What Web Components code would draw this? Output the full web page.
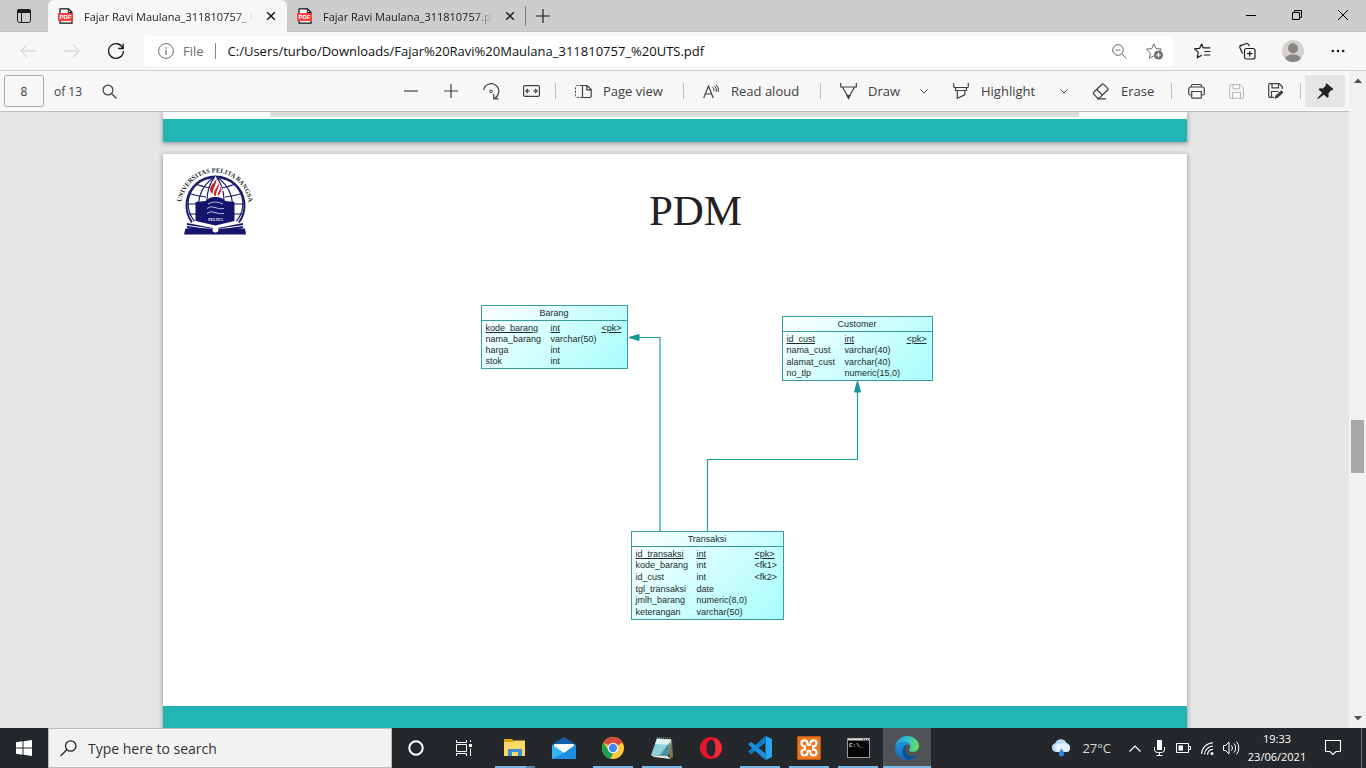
<!DOCTYPE html>
<html lang="en">
<head>
<meta charset="utf-8">
<title>Fajar Ravi Maulana_311810757_ UTS.pdf</title>
<style>
html, body { margin: 0; height: 100%; }
body { font-family: "Open Sans", "Noto Sans", sans-serif; font-size: 13px; color: #1b1b1b; overflow: hidden; }
</style>
</head>
<body>
<desktop-shell>
  <tab-strip slot="browser">
    <browser-tab active>Fajar Ravi Maulana_311810757_ UTS.pdf</browser-tab>
    <browser-tab>Fajar Ravi Maulana_311810757.pdf</browser-tab>
  </tab-strip>
  <address-bar slot="browser" url="C:/Users/turbo/Downloads/Fajar%20Ravi%20Maulana_311810757_%20UTS.pdf"></address-bar>
  <pdf-viewer slot="browser">
    <pdf-toolbar slot="toolbar" page="8" total="13"></pdf-toolbar>
    <pdf-page tail></pdf-page>
    <pdf-page>
      <slide-header>PDM</slide-header>
      <er-diagram>
        <er-entity name="Barang" style="left:0;top:0;width:147px;height:64px;--type:65px;--key:25px"
          fields="kode_barang|int|<pk>;nama_barang|varchar(50)|;harga|int|;stok|int|"></er-entity>
        <er-entity name="Customer" style="left:301px;top:11px;width:151px;height:65px;--type:58px;--key:25px"
          fields="id_cust|int|<pk>;nama_cust|varchar(40)|;alamat_cust|varchar(40)|;no_tlp|numeric(15,0)|"></er-entity>
        <er-entity name="Transaksi" style="left:150px;top:226px;width:153px;height:89px;--type:61px;--key:28px"
          fields="id_transaksi|int|<pk>;kode_barang|int|<fk1>;id_cust|int|<fk2>;tgl_transaksi|date|;jmlh_barang|numeric(8,0)|;keterangan|varchar(50)|"></er-entity>
      </er-diagram>
    </pdf-page>
  </pdf-viewer>
  <task-bar slot="taskbar"></task-bar>
</desktop-shell>

<script>
/* Registers an element whose shadow root holds the given styles and markup. */
function define(name, css, html, ready) {
  const tpl = document.createElement('template');
  customElements.define(name, class extends HTMLElement {
    connectedCallback() {
      if (this.shadowRoot) return;
      this.attachShadow({ mode: 'open' });
      tpl.innerHTML = `<style>:host,*{box-sizing:border-box}button{font:inherit;color:inherit;border:0;background:none;padding:0;margin:0}${css}</style>` +
        (typeof html === 'function' ? html(this) : html);
      this.shadowRoot.append(tpl.content.cloneNode(true));
      if (ready) ready(this, this.shadowRoot);
    }
  });
}
const esc = s => s.replace(/&/g, '&amp;').replace(/</g, '&lt;');

/* Icon set: [width, height, markup]. Strokes use currentColor. */
const S = 'fill="none" stroke="currentColor"';
const ICONS = {
  tabs: [14, 14, `<rect x=".5" y=".5" width="13" height="13" rx="2" ${S}/><path d="M0 2a2 2 0 0 1 2-2h10a2 2 0 0 1 2 2v2H0z" fill="currentColor"/><path d="M4.500 4v9" ${S}/>`],
  pdf: [16, 16, `<path d="M2 .8h8.500l3.500 3.500V15.200H2z" fill="#fff" stroke="#111" stroke-width="1.200"/><path d="M10.300.8v3.700H14" fill="none" stroke="#111"/><rect x="0" y="5" width="15" height="8" fill="#f8403c"/><text x="7.500" y="11.300" text-anchor="middle" font-family="Liberation Sans, sans-serif" font-weight="700" font-size="6" fill="#fff">PDF</text>`],
  close: [10, 10, `<path d="M1.200 1.200l7.600 7.600M8.800 1.200L1.200 8.800" ${S} stroke-width="1.500"/>`],
  plus: [14, 14, `<path d="M7 0v14M0 7h14" ${S} stroke-width="1.200"/>`],
  min: [10, 10, `<path d="M0 5.500h10" ${S}/>`],
  restore: [10, 10, `<path d="M.5 2.500h7v7h-7zM2.500 2.500v-2h7v7h-2" ${S}/>`],
  wclose: [10, 10, `<path d="M0 0l10 10M10 0L0 10" ${S}/>`],
  back: [16, 14, `<path d="M16 7H.8M7 .8L.8 7 7 13.200" ${S}/>`],
  fwd: [16, 14, `<path d="M0 7h15.200M9 .8L15.200 7 9 13.200" ${S}/>`],
  reload: [18, 18, `<path d="M15.900 6.300A7.400 7.400 0 1 0 16.400 9" ${S} stroke-width="1.300"/><path d="M16.200 1.500v5h-5" ${S} stroke-width="1.300"/>`],
  info: [16, 16, `<circle cx="8" cy="8" r="7.400" ${S}/><path d="M8 7v5M8 4.300v1.400" ${S} stroke-width="1.200"/>`],
  zoomout: [15, 15, `<circle cx="6" cy="6" r="5.300" ${S}/><path d="M10 10l4.500 4.500M3.500 6h5" ${S}/>`],
  staradd: [18, 17, `<path d="M7.900.9l2.100 4.600 5.500.6-2.700 2.900M7.900.9L5.800 5.500l-5.400.7 4 3.800-1 5.300 4.300-2.500" ${S} stroke-linejoin="round"/><circle cx="12.500" cy="12" r="4.500" fill="currentColor"/><path d="M12.500 9.500v5M10 12h5" stroke="#fff" stroke-width="1.200"/>`],
  favs: [17, 16, `<path d="M9.300 4.900L7.700 1 5.600 5.300.6 5.900l3.700 3.500-1 5.200 4.500-2.400M9.300 4.900h7M10.300 8.500h6M9.800 12h6.500" ${S} stroke-width="1.200" stroke-linejoin="round"/>`],
  collections: [17, 17, `<rect x="5.500" y="5.500" width="10.500" height="10.500" rx="2" ${S} stroke-width="1.200"/><path d="M10.700 8v5.500M8 10.700h5.500" ${S} stroke-width="1.200"/><path d="M3.500 10.500L1 5a2 2 0 0 1 1-2.600L7 .7a2 2 0 0 1 2.600 1L10.200 3" ${S} stroke-width="1.200"/>`],
  avatar: [22, 22, `<defs><clipPath id="c"><circle cx="11" cy="11" r="11"/></clipPath></defs><circle cx="11" cy="11" r="11" fill="#d3d1ce"/><g fill="#8a8683" clip-path="url(#c)"><circle cx="11" cy="8.300" r="5"/><ellipse cx="11" cy="19" rx="7.800" ry="4.500"/></g>`],
  dots: [14, 4, `<g fill="currentColor"><circle cx="1.800" cy="2" r="1.300"/><circle cx="7" cy="2" r="1.300"/><circle cx="12.200" cy="2" r="1.300"/></g>`],
  search: [15, 15, `<circle cx="6" cy="6" r="4.900" ${S} stroke-width="1.200"/><path d="M9.500 9.500l5 5" ${S} stroke-width="1.200"/>`],
  minus: [14, 14, `<path d="M0 7h14" ${S} stroke-width="1.200"/>`],
  rotate: [17, 17, `<path d="M.7 7A7.600 7.600 0 1 1 11.500 15.200" ${S} stroke-width="1.200"/><path d="M10.700 11v4.800h4.800" ${S} stroke-width="1.200"/><circle cx="8" cy="8.300" r="1.300" ${S}/>`],
  fit: [17, 12, `<rect x=".6" y=".6" width="15.800" height="10.800" rx="1.500" ${S} stroke-width="1.200"/><path d="M3.500 6h3.500M10 6h3.500M5 4L3 6l2 2M12 4l2 2-2 2" ${S} stroke-width="1.200"/>`],
  pageview: [17, 13, `<path d="M7 .5H2.500a2 2 0 0 0-2 2v8a2 2 0 0 0 2 2H7" ${S} stroke-dasharray="2.200 1.300"/><path d="M7.500.5h4.700l4 4v6.500a1.500 1.500 0 0 1-1.500 1.500H7.500zM11.800.5v4.300h4.400" ${S} stroke-width="1.200"/>`],
  read: [17, 15, `<path d="M.7 14L5.500 2l4.800 12M2.300 10h6.400" ${S} stroke-width="1.200"/><path d="M9.500 3.200a4 4 0 0 1 1.500 4M11.300 1.800a6 6 0 0 1 2 6M13 .5a8 8 0 0 1 2.300 7.500" ${S}/>`],
  draw: [17, 16, `<path d="M.7 0v4h15.600V0M2.500 4.300L8.500 14.500 14.500 4.300M7 12.500h3l-1.500 3z" ${S} stroke-width="1.200"/>`],
  highlight: [18, 16, `<path d="M1.700 0v3.500a1 1 0 0 0 1 1h12.600a1 1 0 0 0 1-1V0M3.500 4.500v3h11v-3M5.300 7.500v7.800l7.500-3.500V7.500" ${S} stroke-width="1.200"/>`],
  erase: [18, 17, `<path d="M1.700 9.300L10 1.300a1.200 1.200 0 0 1 1.700 0l4 4a1.200 1.200 0 0 1 0 1.700L7.500 15H5.300L1.700 11.200a1.300 1.300 0 0 1 0-1.900zM4.700 6.500l6 5.700M5 15.900h9" ${S} stroke-width="1.200"/>`],
  chev: [8, 5, `<path d="M.5.5L4 4 7.500.5" ${S}/>`],
  print: [17, 15, `<path d="M3.500 11H2.200A1.500 1.500 0 0 1 .7 9.500V5a2 2 0 0 1 2-2h11.600a2 2 0 0 1 2 2v4.500a1.500 1.500 0 0 1-1.500 1.500h-1.300M3.500 3V1.500a1 1 0 0 1 1-1h8a1 1 0 0 1 1 1V3M3.700 7.500h9.600v5.700a1 1 0 0 1-1 1H4.700a1 1 0 0 1-1-1z" ${S} stroke-width="1.200"/>`],
  save: [15, 15, `<path d="M1.700.6h9.500l3.200 3.200v9.500a1 1 0 0 1-1 1H1.700a1 1 0 0 1-1-1V1.600a1 1 0 0 1 1-1zM4 .6v4.200h6.500V.6M3.500 14.200V8.500h8v5.700" ${S}/>`],
  saveas: [16, 16, `<path d="M6 14.300H1.700a1 1 0 0 1-1-1V1.600a1 1 0 0 1 1-1h9.500l3.200 3.200V6M4 .6v4.200h6.500V.6M3.500 14.200V8.500h7" ${S} stroke-width="1.200"/><path d="M13.300 7.300l2.200 2.200-6 5.500-3 .8.800-3z" fill="currentColor"/>`],
  pin: [17, 16, `<path d="M9.500.3l6.800 5.800-1 1.300-1.300-.2-2.600 3.300.3 3-1.200 1.300-3.700-3.100L1 16l-.7-.7 4.900-5.500-3.700-3.200 1.200-1.300 3.200.1 3-3-.4-1.200z" fill="#222"/>`],
  up: [8, 5, `<path d="M0 5l4-4.500L8 5z" fill="currentColor"/>`],
  down: [8, 5, `<path d="M0 0l4 4.500L8 0z" fill="currentColor"/>`],
  win: [16, 16, `<path d="M0 2.300L6.500 1.300v6.200H0zM7.500 1.200L16 0v7.500H7.500zM0 8.500h6.500v6.200L0 13.700zM7.500 8.500H16V16l-8.500-1.200z" fill="#fff"/>`],
  tsearch: [17, 17, `<circle cx="10.700" cy="6" r="5.200" ${S} stroke-width="1.300"/><path d="M6.800 9.700L.6 16" ${S} stroke-width="1.300"/>`],
  cortana: [16, 16, `<circle cx="8" cy="8" r="6.700" fill="none" stroke="#fff" stroke-width="2"/>`],
  taskview: [16, 16, `<path d="M.5 4.500h10v7H.5zM.5 0v2.500h10V0M.5 16v-2.500h10V16M14.500 0v2M14.500 8.500V16" fill="none" stroke="#fff"/><path d="M13 4h3v3h-3z" fill="#fff"/>`],
  explorer: [22, 20, `<path d="M0 1h8l2 2v15H0z" fill="#e5a50a"/><path d="M0 4h9l1.500-1.500H21V18H0z" fill="#ffd767"/><path d="M4 18v-7h14v7h-4v-4H8v4z" fill="#3f8fd6"/>`],
  mail: [24, 22, `<path d="M0 7.500L12 0l12 7.500V12H0z" fill="#0f5ea8"/><path d="M2 7h20v9H2z" fill="#f4f8fc"/><path d="M0 7.500L12 16 24 7.500V22H0z" fill="#37b6ef"/><path d="M0 22l14-7.300L24 7.500V22z" fill="#1d8fe0"/>`],
  chrome: [22, 22, `<circle cx="11" cy="11" r="11" fill="#fbc934"/><path d="M11 11L1.500 5.500A11 11 0 0 1 20.500 5.500z" fill="#dc4a3d"/><path d="M1.500 5.500L7 14l4 2-2.500 5.700A11 11 0 0 1 1.500 5.500z" fill="#1e9e55"/><path d="M11 5.800h9.700L19 3.500 11 1z" fill="#dc4a3d"/><circle cx="11" cy="11" r="5.300" fill="#fff"/><circle cx="11" cy="11" r="4.200" fill="#4285f4"/>`],
  notepad: [24, 22, `<path d="M17 3l5-.5L23 20l-3 2z" fill="#8a7346"/><path d="M7 1.500L21 2.500 18 19 1 18z" fill="#8fd0dd"/><path d="M7 1.500L21 2.500 20 8 5 7z" fill="#d9f1f4"/><path d="M1 18l17 1.200L20.500 22 4 20z" fill="#e6e6df"/><path d="M7 1h14" stroke="#88959a" stroke-dasharray="1 1"/><path d="M10 18L20 5l-2 14z" fill="#458f9e"/>`],
  opera: [22, 22, `<path fill-rule="evenodd" d="M11 0a11 11 0 1 0 0 22 11 11 0 0 0 0-22zM11 2.800c2.800 0 4.500 3.700 4.500 8.200s-1.700 8.200-4.500 8.200S6.500 15.500 6.500 11 8.200 2.800 11 2.800z" fill="#e8152b"/><path d="M17 2A11 11 0 0 1 17 20C13 21 15.500 17 15.500 11S13 1 17 2z" fill="#ff4a50" opacity=".5"/>`],
  vscode: [24, 24, `<path d="M17.500 0L24 3v18l-6.500 3z" fill="#27a5ee"/><path d="M17.500 0v6.500L3 18.300 0 15.800z" fill="#0f7ccb"/><path d="M17.500 24v-6.500L3 5.700 0 8.200z" fill="#1a8fdd"/>`],
  xampp: [24, 24, `<rect width="24" height="24" rx="2" fill="#ee741d"/><rect x=".5" y=".5" width="23" height="23" rx="2" fill="none" stroke="#b9571a"/><path d="M9 10.300H7.500a3 3 0 1 1 3-3v.5c0 .8.600 1.300 1.500 1.300s1.500-.5 1.500-1.300v-.5a3 3 0 1 1 3 3H15M15 13.500h1.500a3 3 0 1 1-3 3V16c0-.8-.600-1.300-1.500-1.300s-1.500.5-1.500 1.300v.5a3 3 0 1 1-3-3H9M8 10.300v3.200M16 10.300v3.200" fill="none" stroke="#fff" stroke-width="2.200"/>`],
  cmd: [23, 20, `<rect x=".5" y=".5" width="22" height="19" fill="#050505" stroke="#9a9a9a"/><path d="M1 1.500h21" stroke="#d8d8d8" stroke-width="2"/><path d="M16 1.500h1M18 1.500h1M20 1.500h1" stroke="#444"/><text x="2" y="9" font-family="Liberation Mono, monospace" font-weight="700" font-size="6" fill="#ddd">C:\\_</text>`],
  edge: [24, 24, `<defs><linearGradient id="a" x1="0" y1=".4" x2="1" y2=".5"><stop offset="0" stop-color="#1f9fe4"/><stop offset=".5" stop-color="#2fc3c8"/><stop offset="1" stop-color="#6be04f"/></linearGradient><linearGradient id="b" x1="0" y1="0" x2="0" y2="1"><stop offset="0" stop-color="#1b93e2"/><stop offset="1" stop-color="#1268b8"/></linearGradient></defs><path d="M.3 10.500C1.200 4.300 6 0 12 0c6.800 0 12 4.700 12 9.800 0 4-3 6.200-6 6.200-2.700 0-4-1-4-2 0-.8 1.200-1.200 1.200-3.200C15.200 8 12.500 6 9 6 5 6 1.500 8 .3 10.500z" fill="url(#a)"/><path d="M.2 11C1.500 8 5.200 6 9 6c3.400 0 5.600 1.600 6.100 4-1.200-1.200-2.800-1.700-4-1.300-3.300 1.200-4.300 8.300 2 11.300 3.400 1.600 7 .4 8.700-.6-2 3.200-5.900 4.600-9.500 4.600C5 24-.6 18 .2 11z" fill="url(#b)"/><path d="M11 8.700c-3.500 1.800-6.200 9.800 1.200 15.200 4 .2 8-2 9.600-4.600-8.500 3.500-14.800-3.500-10.800-10.600z" fill="#0b4f97"/>`],
  weather: [21, 17, `<path d="M5 12a4.600 4.600 0 0 1-.6-9A6 6 0 0 1 15.500 3 4.700 4.700 0 0 1 16 12z" fill="#b7d9fb"/><path d="M9 12a4.300 4.300 0 1 1 1.500-8A5 5 0 0 1 18 6.500 3.500 3.500 0 0 1 16.500 12z" fill="#e3f0fd"/><path d="M10.500 8.500c2 3 2.700 4 2.700 5.300a2.700 2.700 0 0 1-5.400 0c0-1.300.8-2.300 2.700-5.300z" fill="#2b83dc"/>`],
  tchev: [12, 7, `<path d="M.5 6.500L6 1l5.500 5.500" ${S} stroke-width="1.200"/>`],
  mic: [11, 16, `<rect x="3" y="0" width="5" height="10" fill="#fff"/><path d="M.5 7v3a3 3 0 0 0 3 2.500h4a3 3 0 0 0 3-2.500V7M5.500 12.500v3M2.500 15.500h6" ${S}/>`],
  battery: [15, 10, `<path d="M.5.500h12v9H.5zM13 3.500h1.500v3H13" ${S}/><path d="M2.500 2.500h4.500v5H2.500z" fill="#fff"/>`],
  wifi: [13, 13, `<path d="M.5 12A12 12 0 0 1 12 .7M3.500 12.500A9 9 0 0 1 12 4M6.500 12.700A6 6 0 0 1 12 7.200" ${S} stroke-width="1.100"/><circle cx="11" cy="11.500" r="1.500" fill="#fff"/>`],
  speaker: [17, 14, `<path d="M.5 4.500h2L6 1v12L2.500 9.500h-2zM8.500 4.500a4 4 0 0 1 0 5M11 2.500a7 7 0 0 1 0 9M13.500.7a9.500 9.500 0 0 1 0 12.600" ${S}/>`],
  notif: [17, 16, `<path d="M.5.5h15v11H11L8 14.500 5 11.500H.5z" ${S} stroke-width="1.100"/>`]
};

define('ui-icon', ':host{display:block;flex:none;line-height:0}svg{display:block;overflow:visible}', el => {
  const [w, h, body] = ICONS[el.getAttribute('name')];
  return `<svg width="${w}" height="${h}" viewBox="0 0 ${w} ${h}" aria-hidden="true">${body}</svg>`;
});

/* Square button holding one icon. */
define('icon-button', `
  :host{display:flex;flex:none;align-items:center;justify-content:center;width:40px;height:32px;border-radius:2px}
  button{display:flex;align-items:center;justify-content:center;width:100%;height:100%}
  button:disabled{color:inherit}
`, el => `<button type="button" aria-label="${el.getAttribute('label') || ''}" ${el.hasAttribute('off') ? 'disabled' : ''}><ui-icon name="${el.getAttribute('icon')}"></ui-icon></button>`);

/* Button with an icon and a slotted text label. */
define('label-button', `
  :host{display:flex;flex:none;height:32px}
  button{display:flex;align-items:center;gap:11px;width:100%;height:100%;padding-left:15px;white-space:nowrap}
`, el => `<button type="button"><ui-icon name="${el.getAttribute('icon')}"></ui-icon><slot></slot></button>`);

define('desktop-shell', `
  :host{display:flex;flex-direction:column;height:100vh;min-height:0}
  main{flex:1;min-height:0;display:flex;flex-direction:column}
`, `<main><slot name="browser"></slot></main><slot name="taskbar"></slot>`);

define('tab-strip', `
  :host{display:flex;flex:none;height:32px;background:#cdcdcd;box-shadow:inset 0 -1px #c2c2c2}
  .lead{width:48px;height:32px}
  nav{display:flex;flex:1;min-width:0}
  .new{width:34px;height:32px}
  .win{width:46px;height:30px;color:#000}
`, `<icon-button class="lead" icon="tabs" label="Tab actions"></icon-button>
  <nav><slot></slot><icon-button class="new" icon="plus" label="New tab"></icon-button></nav>
  <icon-button class="win" icon="min" label="Minimize"></icon-button>
  <icon-button class="win" icon="restore" label="Restore"></icon-button>
  <icon-button class="win" icon="wclose" label="Close"></icon-button>`);

define('browser-tab', `
  :host{display:flex;flex:0 1 239px;min-width:0;align-items:center;gap:10px;padding:0 8px 0 10px;font-size:11px}
  :host([active]){background:#f7f7f7;border-radius:6px 6px 0 0}
  :host(:not([active])){background:linear-gradient(#808080,#808080) right center/1px 20px no-repeat}
  .t{flex:1;min-width:0;overflow:hidden;white-space:nowrap;margin-right:-4px;-webkit-mask-image:linear-gradient(90deg,#000 88%,transparent 98%);mask-image:linear-gradient(90deg,#000 88%,transparent 98%)}
  icon-button{width:16px;height:16px}
`, `<ui-icon name="pdf"></ui-icon><span class="t"><slot></slot></span><icon-button icon="close" label="Close tab"></icon-button>`);

define('address-bar', `
  :host{display:flex;flex:none;align-items:center;height:39px;background:#f7f7f7;border-bottom:1px solid #d2d2d2;padding:0 6px}
  .nav{width:44px}
  .off{color:#c9c9c9}
  .box{display:flex;flex:1;min-width:0;align-items:center;height:30px;margin:0 6px;padding:0 1px 0 14px;background:#fff;border-radius:4px;color:#6b6b6b;font-size:13px}
  .file{padding:0 11px 0 9px;border-right:1px solid #888;line-height:16px}
  input{flex:1;min-width:0;border:0;padding:0 0 0 12px;background:none;font:inherit;color:#101010;outline:0}
  .in{width:36px;height:30px}
  .act{width:45px}
`, el => `<icon-button class="nav off" icon="back" label="Back" off></icon-button>
  <icon-button class="nav off" icon="fwd" label="Forward" off></icon-button>
  <icon-button class="nav" icon="reload" label="Refresh"></icon-button>
  <div class="box"><ui-icon name="info"></ui-icon><label class="file" for="u">File</label>
    <input id="u" value="${el.getAttribute('url')}">
    <icon-button class="in" icon="zoomout" label="Zoom"></icon-button>
    <icon-button class="in" icon="staradd" label="Add to favorites"></icon-button></div>
  <icon-button class="act" icon="favs" label="Favorites"></icon-button>
  <icon-button class="act" icon="collections" label="Collections"></icon-button>
  <icon-button class="act" icon="avatar" label="Profile"></icon-button>
  <icon-button class="act" icon="dots" label="Settings and more"></icon-button>`);

define('pdf-toolbar', `
  :host{display:flex;flex:none;align-items:center;height:41px;background:#f7f7f7;border-bottom:1px solid #bdbdbd;padding:0 4px;color:#404040}
  input{width:40px;height:32px;border:1px solid #ababab;border-radius:2px;background:#f7f7f7;text-align:center;font:inherit;font-size:12px;color:inherit;padding:0}
  label{padding-left:10px;width:55px;font-size:12px}
  .find{width:20px}
  .tools{display:flex;flex:none;align-items:center;margin-left:auto}
  hr{width:1px;height:16px;margin:0 4px;border:0;background:#bdbdbd}
  .pv{width:119px}.ra{width:128px}.dr{width:86px}.hl{width:114px}.er{width:90px}
  .cv{width:26px}
  .dim{color:#b8b8b8}
  .pin{background:#e5e5e5}
`, el => `<input id="p" value="${el.getAttribute('page')}"><label for="p">of ${el.getAttribute('total')}</label>
  <icon-button class="find" icon="search" label="Find"></icon-button>
  <div class="tools">
    <icon-button icon="minus" label="Zoom out"></icon-button><icon-button icon="plus" label="Zoom in"></icon-button>
    <icon-button icon="rotate" label="Rotate"></icon-button><icon-button icon="fit" label="Fit to width"></icon-button><hr>
    <label-button class="pv" icon="pageview">Page view</label-button><hr>
    <label-button class="ra" icon="read">Read aloud</label-button><hr>
    <label-button class="dr" icon="draw">Draw</label-button><icon-button class="cv" icon="chev" label="Draw options"></icon-button>
    <label-button class="hl" icon="highlight">Highlight</label-button><icon-button class="cv" icon="chev" label="Highlight options"></icon-button>
    <label-button class="er" icon="erase">Erase</label-button><hr>
    <icon-button icon="print" label="Print"></icon-button><icon-button class="dim" icon="save" label="Save" off></icon-button>
    <icon-button icon="saveas" label="Save as"></icon-button><hr>
    <icon-button class="pin" icon="pin" label="Pin toolbar"></icon-button>
  </div>`);

define('pdf-viewer', `
  :host{display:flex;flex:1;min-height:0}
  .col{flex:1;min-width:0;display:flex;flex-direction:column}
  .doc{flex:1;min-height:0;overflow:hidden;background:#e6e6e6;display:flex;flex-direction:column;align-items:center;gap:12px}
  .bar{width:17px;background:#f1f1f1;color:#505050;display:flex;flex-direction:column;align-items:center;padding:7px 0}
  .track{flex:1;width:13px;display:grid;grid-template-rows:336fr 53fr 242fr}
  .thumb{grid-row:2;background:#a8a8a8}
`, `<div class="col"><slot name="toolbar"></slot><div class="doc"><slot></slot></div></div>
  <div class="bar"><ui-icon name="up"></ui-icon><div class="track"><div class="thumb"></div></div><ui-icon name="down"></ui-icon></div>`);

define('pdf-page', `
  :host{display:flex;flex:none;flex-direction:column;width:100%;max-width:1024px;aspect-ratio:16/9;background:#fff;box-shadow:0 1px 4px 1px rgba(0,0,0,.28)}
  :host([tail]){aspect-ratio:auto;height:30px}
  .body{flex:1;min-height:0}
  .slab{display:none;width:79%;height:5px;margin:0 auto;background:#d9dddc}
  :host([tail]) .slab{display:block}
  footer{height:24px;background:#21b5b5}
  :host([tail]) footer{height:23px}
`, `<div class="body"><div class="slab"></div><slot></slot></div><footer></footer>`);

define('slide-header', `
  :host{display:flex;align-items:flex-start;padding:14px 54px 0 14px;height:151px}
  svg{flex:none;overflow:visible;margin-right:6px}
  h1{flex:1;margin:0;padding-top:18px;text-align:center;font:400 43px/50px "Liberation Serif",serif;color:#222}
`, `<svg width="76" height="68" viewBox="0 0 76 68" role="img" aria-label="Universitas Pelita Bangsa">
    <defs><path id="arc" d="M4 44V39.500A34 35 0 0 1 72 39.500V44"/></defs>
    <text font-family="Liberation Serif, serif" font-weight="700" font-size="6.500" fill="#222a35"><textPath href="#arc" startOffset="50%" text-anchor="middle">UNIVERSITAS PELITA BANGSA</textPath></text>
    <g fill="none" stroke="#1b1b6e" stroke-width="1.200">
      <path d="M15 54.500A29 29 0 1 1 62 54.500" stroke-width="2"/>
      <path d="M17.500 53A26 26 0 0 1 38.500 10M59.500 53A26 26 0 0 0 38.500 10" />
      <path d="M24 54C18 36 22 18 38.500 8.500C55 18 59 36 53 54"/>
      <path d="M30 32C30 24 33 14 38.500 8.500C44 14 47 24 47 32"/>
      <path d="M20 16.500Q38.500 24 57 16.500M12 25.500Q20 28 29 29M65 25.500Q57 28 48 29M10 36H20M57 36H67M11 46H20M57 46H66"/>
    </g>
    <path d="M38.500 8L32 22l3 8h7l4-8z" fill="#fff"/>
    <path d="M39.500 10c-1 4-6 7-6.500 11 0 3 1.500 4 2.500 5 0-6 4-8 4-16zM41.500 14c0 5-5 7-4.500 13l2 1c0-6 4-8 2.500-14zM43.500 18c.5 4-3 6-3 10 3-2 5-6 3-10z" fill="#c2262b"/>
    <path d="M18.500 34l10-1Q33 28.500 38.500 29q5.500-.5 10 4l9 1v19l-19 4.500L18.500 53z" fill="#15156e"/>
    <path d="M31 36q7-4 15 0M30 40.500q3-3 8-1t9 1M30 45.500q3-3 8-1t9 1" fill="none" stroke="#b9bbe0"/>
    <text x="38.500" y="53" text-anchor="middle" font-family="Liberation Serif, serif" font-weight="700" font-size="4" fill="#fff">PELITA</text>
    <path d="M10 55l28.500 5.500L66 55v5l-5 1H15l-5-1z" fill="#15156e"/>
    <path d="M10 57.500l28.500 4 28-4" fill="none" stroke="#fff"/>
    <path d="M8.500 60.500H68l1 6H7z" fill="#15156e"/><circle cx="38.500" cy="61.500" r="3" fill="#fff"/>
  </svg><h1><slot></slot></h1>`);

/* Free canvas: entities are placed by their own left/top, connectors sit beneath. */
define('er-diagram', `
  :host{display:block;position:relative;width:452px;height:315px;margin-left:318px}
  svg{position:absolute;inset:0;overflow:visible}
`, `<svg width="452" height="315" viewBox="0 0 452 315" aria-hidden="true">
    <path d="M179 226V32.500H158M226.500 226V154.500H376.500V86" fill="none" stroke="#1f9ca3" stroke-width="1.200"/>
    <path d="M148 32.500l10-3v6zM376.500 76l-3 11h6z" fill="#12989c" stroke="#12989c"/>
  </svg><slot></slot>`);

define('er-entity', `
  :host{display:flex;flex-direction:column;position:absolute;border:1px solid #379a9c;background:linear-gradient(135deg,#fff 0%,#d4ffff 45%,#a9fcfd 100%);font:9px/10px "Liberation Sans",sans-serif;color:#1c2b2b}
  header{flex:none;height:15px;line-height:14px;text-align:center;border-bottom:1px solid #379a9c}
  .rows{flex:1;min-height:0;padding:1px 0 1px 4px}
  table{width:100%;height:100%;border-collapse:collapse;table-layout:fixed}
  td{padding:0;white-space:nowrap;vertical-align:middle}
  td:first-child{width:var(--type)}td:last-child{width:var(--key)}
  tr:first-child td{text-decoration:underline}
`, el => `<header>${el.getAttribute('name')}</header><div class="rows"><table>${el.getAttribute('fields').split(';').map(r =>
    `<tr>${r.split('|').map(c => `<td>${esc(c)}</td>`).join('')}</tr>`).join('')}</table></div>`);

define('task-app', `
  :host{display:flex;flex:none;width:48px;height:40px;position:relative}
  :host([active]){background:#505355}
  button{flex:1;display:flex;align-items:center;justify-content:center}
  i{position:absolute;left:4px;right:4px;bottom:0;height:2px;background:#76b9ed;display:none}
  :host([open]) i{display:block}
  :host([active]) i{left:0;right:0}
  :host([multi]) i{background:linear-gradient(90deg,#76b9ed 31px,#5b82a0 31px)}
`, el => `<button type="button" aria-label="${el.getAttribute('label')}"><ui-icon name="${el.getAttribute('icon')}"></ui-icon></button><i></i>`);

define('task-bar', `
  :host{display:flex;flex:none;height:40px;background:#25282a;color:#fff}
  .search{display:flex;flex:0 1 344px;min-width:0;align-items:center;gap:11px;padding-left:11px;background:#f2f2f2;border:1px solid #bcbcbc;color:#222}
  .search input{flex:1;min-width:0;border:0;background:none;font:inherit;font-size:14px;padding:0;outline:0}
  .search input::placeholder{color:#333;opacity:1}
  .apps{display:flex;gap:1px;margin-left:3px}
  .tray{display:flex;align-items:center;margin-left:auto}
  .weather{display:flex;align-items:center;gap:10px;padding-right:12px;color:#d6d6d6;font-size:13px}
  .t{width:24px}
  time{width:68px;text-align:center;font-size:11px;line-height:18px}
  time span{display:block}
  .n{width:44px;margin-right:6px}
  .show{width:5px;height:40px;border-left:1px solid #6e7072}
`, `<task-app icon="win" label="Start"></task-app>
  <label class="search"><ui-icon name="tsearch"></ui-icon><input type="text" placeholder="Type here to search" aria-label="Type here to search"></label>
  <task-app icon="cortana" label="Cortana"></task-app><task-app icon="taskview" label="Task view"></task-app>
  <div class="apps">
    <task-app open multi icon="explorer" label="File Explorer"></task-app><task-app icon="mail" label="Mail"></task-app>
    <task-app open icon="chrome" label="Chrome"></task-app><task-app open icon="notepad" label="Notepad"></task-app>
    <task-app icon="opera" label="Opera"></task-app><task-app open icon="vscode" label="Visual Studio Code"></task-app>
    <task-app open icon="xampp" label="XAMPP"></task-app><task-app open icon="cmd" label="Command Prompt"></task-app>
    <task-app open active icon="edge" label="Microsoft Edge"></task-app>
  </div>
  <div class="tray">
    <div class="weather"><ui-icon name="weather"></ui-icon><span>27°C</span></div>
    <icon-button class="t" icon="tchev" label="Show hidden icons"></icon-button><icon-button class="t" icon="mic" label="Microphone"></icon-button>
    <icon-button class="t" icon="battery" label="Battery"></icon-button><icon-button class="t" icon="wifi" label="Network"></icon-button>
    <icon-button class="t" icon="speaker" label="Volume"></icon-button>
    <time datetime="2021-06-23T19:33"><span>19:33</span><span>23/06/2021</span></time>
    <icon-button class="n" icon="notif" label="Notifications"></icon-button><div class="show"></div>
  </div>`);
</script>
</body>
</html>
